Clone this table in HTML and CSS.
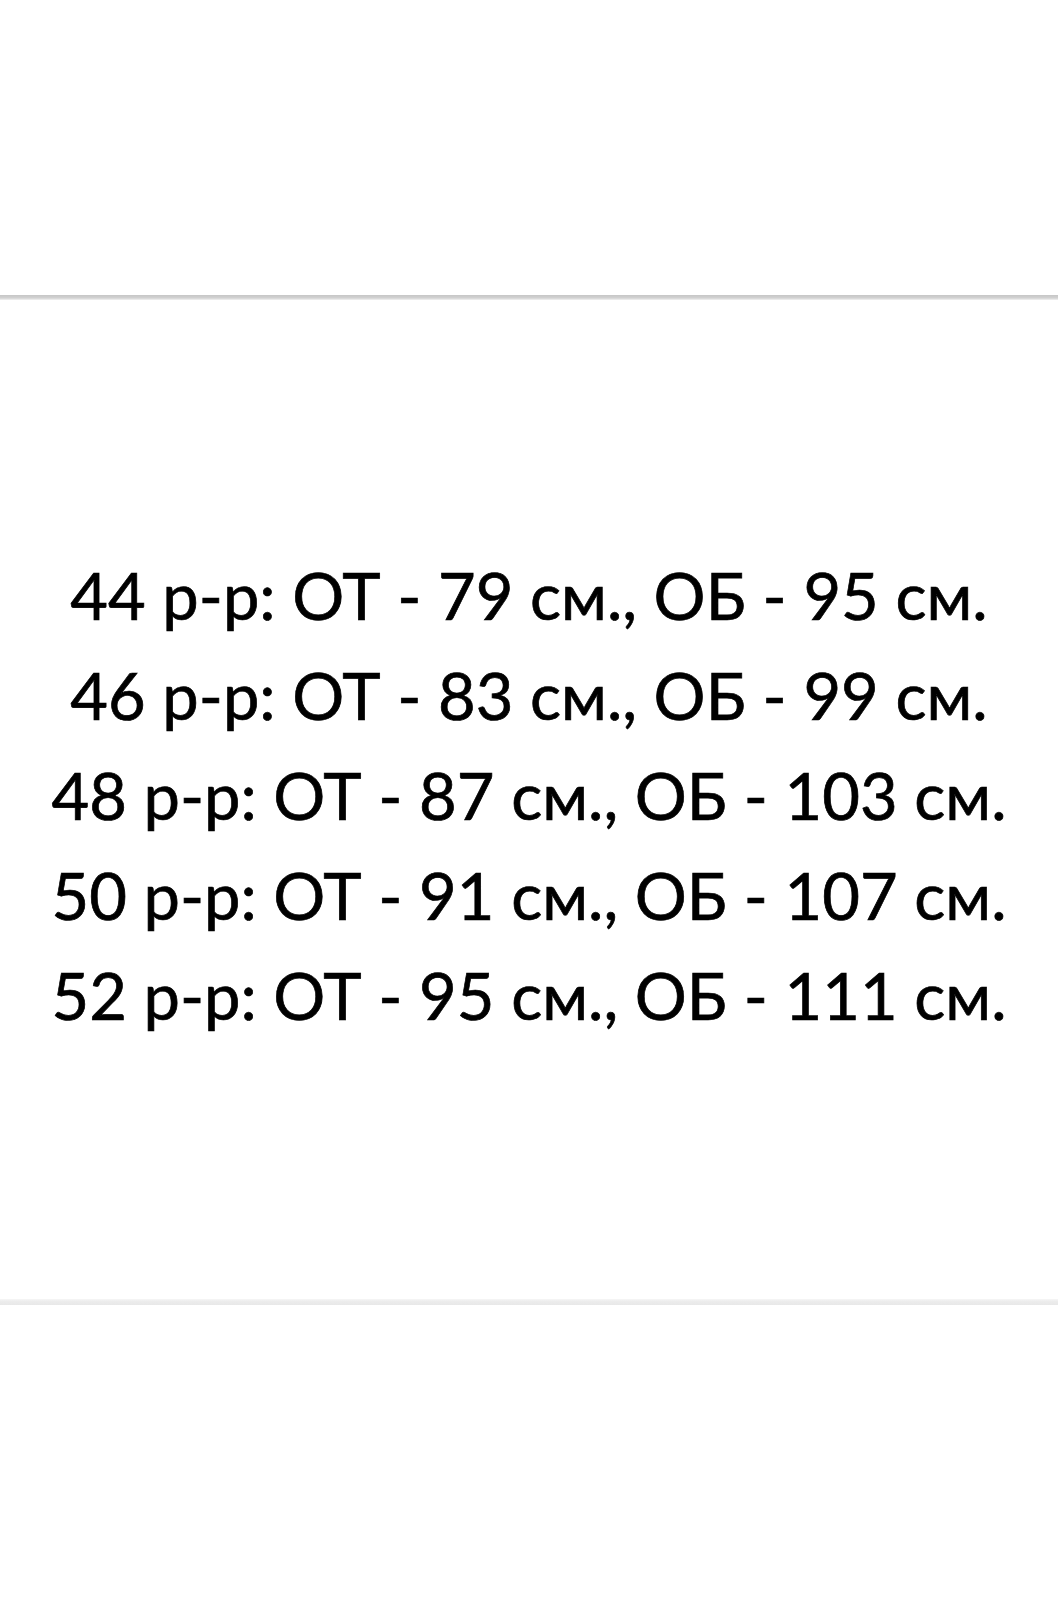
FILE: index.html
```html
<!DOCTYPE html>
<html lang="ru">
<head>
    <meta charset="UTF-8">
    <meta name="viewport" content="width=device-width, initial-scale=1.0">
    <title>Размеры</title>
    <link rel="stylesheet" href="styles.css">
</head>
<body>
    <div class="top-space"></div>
    <div class="rule rule-top"></div>

    <div class="sizes">
        <div class="size-row">44 р-р: ОТ - 79 см., ОБ - 95 см.</div>
        <div class="size-row">46 р-р: ОТ - 83 см., ОБ - 99 см.</div>
        <div class="size-row">48 р-р: ОТ - 87 см., ОБ - 103 см.</div>
        <div class="size-row">50 р-р: ОТ - 91 см., ОБ - 107 см.</div>
        <div class="size-row">52 р-р: ОТ - 95 см., ОБ - 111 см.</div>
    </div>

    <div class="rule rule-bottom"></div>
    <div class="bottom-space"></div>
</body>
</html>
```

FILE: styles.css
```css
* {
    margin: 0;
    padding: 0;
    box-sizing: border-box;
}

body {
    font-family: Lato, "Open Sans", sans-serif;
    background: #fff;
    color: #000;
    width: 1058px;
}

.top-space {
    height: 295px;
}

.rule {
    height: 5px;
}

.rule-top {
    background: linear-gradient(#c6c6c6, #d2d2d2 60%, #f2f2f2);
}

.rule-bottom {
    background: linear-gradient(#f6f6f6, #ececec 40%, #e8e8e8);
    height: 6px;
}

.sizes {
    height: 999px;
    padding-bottom: 10px;
    display: flex;
    flex-direction: column;
    justify-content: center;
    align-items: center;
}

.size-row {
    font-size: 65px;
    line-height: 100px;
    white-space: nowrap;
    text-align: center;
    -webkit-text-stroke: 0.7px #000;
}

.bottom-space {
    height: 295px;
}
```
